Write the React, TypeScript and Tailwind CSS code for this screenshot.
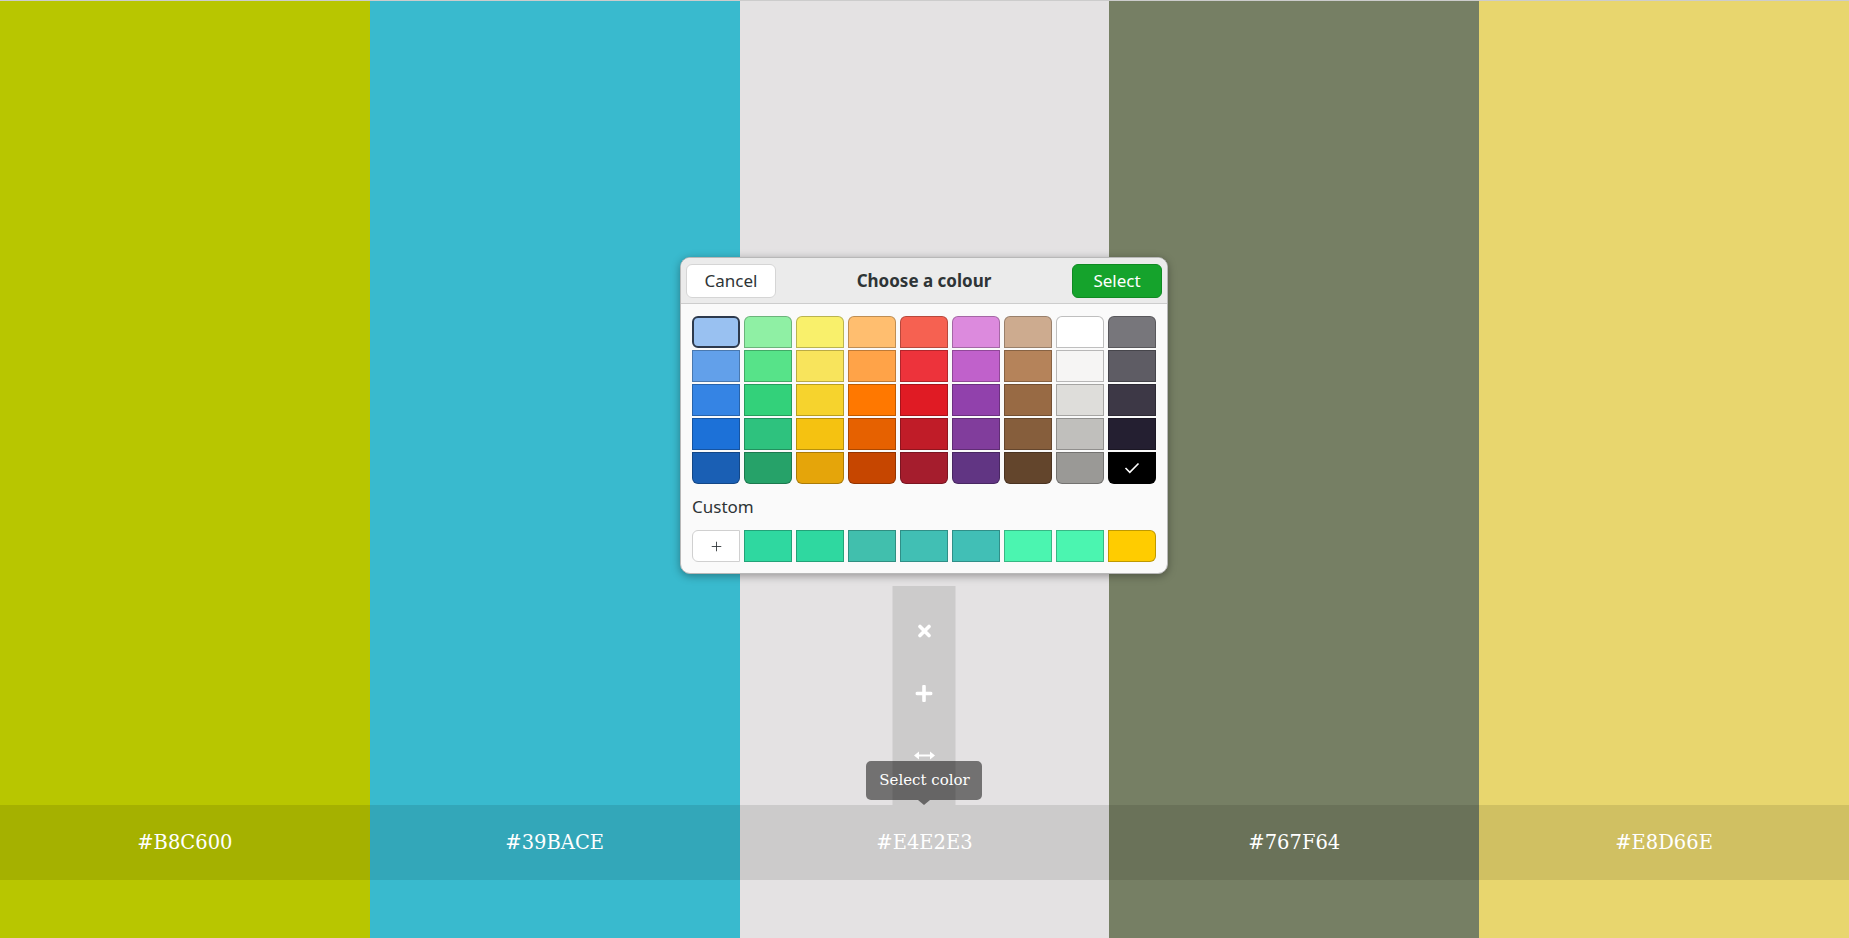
import { Plus } from "lucide-react"

const columns = ["#B8C600", "#39BACE", "#E4E2E3", "#767F64", "#E8D66E"]

const palette = [
  ["#99c1f1", "#8ff0a4", "#f9f06b", "#ffbe6f", "#f66151", "#dc8add", "#cdab8f", "#ffffff", "#77767b"],
  ["#62a0ea", "#57e389", "#f8e45c", "#ffa348", "#ed333b", "#c061cb", "#b5835a", "#f6f5f4", "#5e5c64"],
  ["#3584e4", "#33d17a", "#f6d32d", "#ff7800", "#e01b24", "#9141ac", "#986a44", "#deddda", "#3d3846"],
  ["#1c71d8", "#2ec27e", "#f5c211", "#e66100", "#c01c28", "#813d9c", "#865e3c", "#c0bfbc", "#241f31"],
  ["#1a5fb4", "#26a269", "#e5a50a", "#c64600", "#a51d2d", "#613583", "#63452c", "#9a9996", "#000000"],
]

const custom = ["#2fd8a0", "#2fd8a0", "#41bfad", "#41bfb4", "#41bfb6", "#4bf5b0", "#4bf5b0", "#ffcc00"]

function Toolbar() {
  return (
    <>
      {/* column tools */}
      <div className="absolute left-1/2 -translate-x-1/2 top-[585px] h-[219px] w-[63px] bg-black/10 flex flex-col items-center pt-[14px]">
        <div className="h-[62px] flex items-center justify-center">
          <svg width="14" height="14" viewBox="0 0 14 14">
            <path d="M2.5 2.5 L11.5 11.5 M11.5 2.5 L2.5 11.5" stroke="white" strokeWidth="3.6" strokeLinecap="round" />
          </svg>
        </div>
        <div className="h-[62px] flex items-center justify-center">
          <svg width="17" height="17" viewBox="0 0 17 17">
            <path d="M8.5 1.5 V15.5 M1.5 8.5 H15.5" stroke="white" strokeWidth="3.6" strokeLinecap="round" />
          </svg>
        </div>
        <div className="h-[62px] flex items-center justify-center">
          <svg width="22" height="9" viewBox="0 0 22 9">
            <path d="M4 4.5 H18" stroke="white" strokeWidth="2" />
            <path d="M0.5 4.5 L5.5 0.5 V8.5 Z M21.5 4.5 L16.5 0.5 V8.5 Z" fill="white" />
          </svg>
        </div>
      </div>

      {/* tooltip */}
      <div className="absolute left-1/2 -translate-x-1/2 top-[760px] flex flex-col items-center">
        <div
          className="w-[116px] h-[39px] rounded-[5px] bg-black/50 flex items-center justify-center text-white text-[15px]"
          style={{ fontFamily: '"DejaVu Serif", serif' }}
        >
          Select color
        </div>
        <div className="w-0 h-0 border-l-[6px] border-r-[6px] border-t-[5px] border-l-transparent border-r-transparent border-t-black/50" />
      </div>
    </>
  )
}

function ColourDialog() {
  return (
    <div
      className="absolute left-[680px] top-[256px] w-[488px] rounded-[10px] border border-[#b8b8b8] bg-[#fafafa] shadow-[0_2px_8px_rgba(0,0,0,0.35)] overflow-hidden text-[#2e3436]"
      style={{ fontFamily: '"Noto Sans", sans-serif' }}
    >
      <div className="h-[46px] bg-[#ebebeb] border-b border-[#cdcdcd] flex items-center justify-between px-[5px]">
        <button className="w-[90px] h-[34px] rounded-[6px] bg-white border border-[#d5d5d5] text-[17px]">
          Cancel
        </button>
        <span className="text-[17px] font-bold">Choose a colour</span>
        <button className="w-[90px] h-[34px] rounded-[6px] bg-[#15a32c] border border-[#0f8a22] text-white text-[17px]">
          Select
        </button>
      </div>

      <div className="px-[11px] pt-[12px] pb-[11px]">
        <div className="grid grid-cols-[repeat(9,48px)] gap-x-[4px] gap-y-[2px]">
          {palette.map((row, r) =>
            row.map((c, i) => {
              const top = r === 0 ? "rounded-t-[6px]" : ""
              const bottom = r === 4 ? "rounded-b-[6px]" : ""
              const selected = r === 0 && i === 0
              return (
                <div
                  key={`${r}-${i}`}
                  className={`h-[32px] flex items-center justify-center ${top} ${bottom} ${
                    selected ? "border-2 border-[#2d3a4d] rounded-[6px]" : "border border-black/25"
                  }`}
                  style={{ backgroundColor: c }}
                >
                  {r === 4 && i === 8 && (
                    <svg width="16" height="12" viewBox="0 0 16 12">
                      <path d="M1.5 6 L5.8 10.3 L14.5 1.5" stroke="white" strokeWidth="1.6" fill="none" />
                    </svg>
                  )}
                </div>
              )
            })
          )}
        </div>

        <div className="mt-[8px] h-[30px] leading-[30px] text-[17px]">Custom</div>

        <div className="mt-[8px] flex gap-[4px]">
          <div className="w-[48px] h-[32px] rounded-l-[6px] bg-white border border-[#d0d0d0] flex items-center justify-center">
            <Plus className="w-[15px] h-[15px] text-[#2e3436]" strokeWidth={1.4} />
          </div>
          {custom.map((c, i) => (
            <div
              key={i}
              className={`w-[48px] h-[32px] border border-black/25 ${i === custom.length - 1 ? "rounded-r-[6px]" : ""}`}
              style={{ backgroundColor: c }}
            />
          ))}
        </div>
      </div>
    </div>
  )
}

export default function App() {
  return (
    <div className="relative w-[1849px] h-[938px] overflow-hidden border-t border-[#cccccc] flex">
      {columns.map((c, i) => (
        <div key={c} className="relative flex-1 flex flex-col" style={{ backgroundColor: c }}>
          <div className="flex-1" />
          <div
            className="h-[75px] bg-black/10 flex items-center justify-center text-white text-[19.5px]"
            style={{ fontFamily: '"DejaVu Serif", serif' }}
          >
            {c}
          </div>
          <div className="h-[58px]" />
          {i === 2 && <Toolbar />}
        </div>
      ))}
      <ColourDialog />
    </div>
  )
}
